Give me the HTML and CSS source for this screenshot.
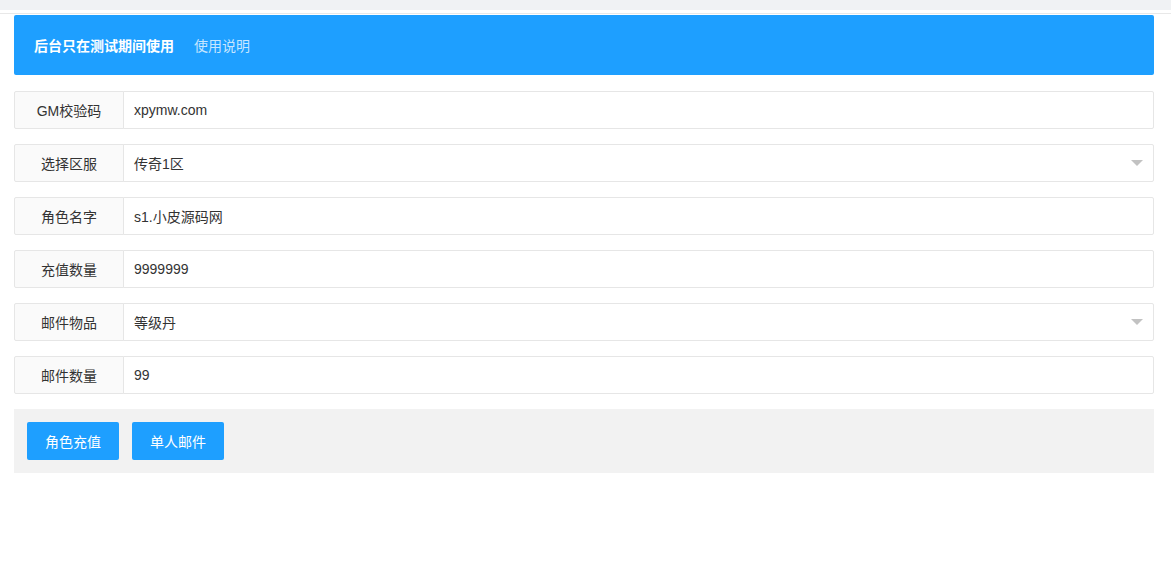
FILE: index.html
```html
<!DOCTYPE html>
<html lang="zh-CN">
<head>
    <meta charset="UTF-8">
    <meta name="viewport" content="width=device-width, initial-scale=1.0">
    <title>GM后台</title>
    <link rel="stylesheet" href="styles.css">
</head>
<body>
    <div class="topbar"></div>
    <div class="main">
        <div class="header">
            <span class="title">后台只在测试期间使用</span>
            <a class="help" href="#">使用说明</a>
        </div>
        <form class="form">
            <div class="item">
                <label class="label">GM校验码</label>
                <input class="input" type="text" value="xpymw.com">
            </div>
            <div class="item">
                <label class="label">选择区服</label>
                <div class="select">传奇1区<i class="arrow"></i></div>
            </div>
            <div class="item">
                <label class="label">角色名字</label>
                <input class="input" type="text" value="s1.小皮源码网">
            </div>
            <div class="item">
                <label class="label">充值数量</label>
                <input class="input" type="text" value="9999999">
            </div>
            <div class="item">
                <label class="label">邮件物品</label>
                <div class="select">等级丹<i class="arrow"></i></div>
            </div>
            <div class="item">
                <label class="label">邮件数量</label>
                <input class="input" type="text" value="99">
            </div>
            <div class="actions">
                <button type="button" class="btn">角色充值</button>
                <button type="button" class="btn">单人邮件</button>
            </div>
        </form>
    </div>
</body>
</html>
```

FILE: styles.css
```css
body {
    margin: 0;
    font-family: "Liberation Sans", Arial, "Noto Sans CJK SC", sans-serif;
    font-size: 14px;
    color: #333;
    background: #fff;
}
.topbar {
    height: 10px;
    background: #f0f2f4;
}
.main {
    margin-top: 3px;
    border-top: 1px solid #e8e8e8;
    padding: 1px 17px 0 14px;
}
.header {
    display: flex;
    align-items: center;
    height: 60px;
    padding: 0 20px;
    background: #1e9fff;
    border-radius: 2px;
}
.title {
    color: #fff;
    font-weight: bold;
}
.help {
    margin-left: 20px;
    color: rgba(255, 255, 255, 0.75);
    text-decoration: none;
}
.form {
    margin-top: 16px;
}
.item {
    display: flex;
    height: 38px;
    margin-bottom: 15px;
}
.label {
    box-sizing: border-box;
    width: 110px;
    flex: none;
    display: flex;
    align-items: center;
    justify-content: center;
    background: #fafafa;
    border: 1px solid #e6e6e6;
    border-radius: 2px 0 0 2px;
    color: #333;
}
.input, .select {
    box-sizing: border-box;
    flex: 1;
    height: 38px;
    margin: 0 0 0 -1px;
    padding: 0 10px;
    border: 1px solid #e6e6e6;
    border-radius: 0 2px 2px 0;
    font: inherit;
    color: #333;
    outline: none;
}
.select {
    position: relative;
    display: flex;
    align-items: center;
}
.arrow {
    position: absolute;
    right: 10px;
    top: 15px;
    border-style: solid;
    border-width: 6px 6px 0;
    border-color: #c2c2c2 transparent transparent;
}
.actions {
    display: flex;
    gap: 13px;
    padding: 13px;
    background: #f2f2f2;
}
.btn {
    height: 38px;
    padding: 0 18px;
    border: none;
    border-radius: 2px;
    background: #1e9fff;
    color: #fff;
    font: inherit;
    cursor: pointer;
}
```
